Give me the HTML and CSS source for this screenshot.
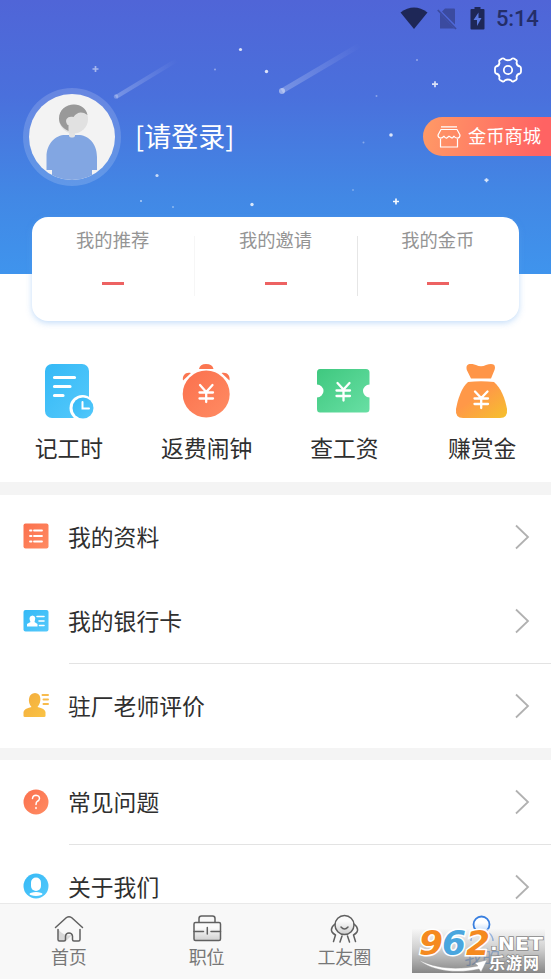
FILE: index.html
```html
<!DOCTYPE html>
<html lang="zh-CN">
<head>
<meta charset="utf-8">
<title>我的</title>
<link rel="stylesheet" href="styles.css">
</head>
<body>
<svg class="defs" width="0" height="0" aria-hidden="true">
  <defs>
    <linearGradient id="blue" x1="0" y1="0" x2="1" y2="1"><stop offset="0" stop-color="#35b9f6"/><stop offset="1" stop-color="#55c9fb"/></linearGradient>
    <linearGradient id="red" x1="0" y1="0" x2="1" y2="1"><stop offset="0" stop-color="#fb704d"/><stop offset="1" stop-color="#ff8c63"/></linearGradient>
    <linearGradient id="green" x1="0" y1="0" x2="1" y2="1"><stop offset="0" stop-color="#3fc87f"/><stop offset="1" stop-color="#68dfa4"/></linearGradient>
    <linearGradient id="gold" x1="0" y1="0" x2="1" y2="1"><stop offset=".4" stop-color="#ff9848"/><stop offset="1" stop-color="#f5c12d"/></linearGradient>
    <linearGradient id="amber" x1="0" y1="0" x2="1" y2="1"><stop offset="0" stop-color="#f3ac3c"/><stop offset="1" stop-color="#fac345"/></linearGradient>
    <linearGradient id="shade" x1="0" y1="0" x2="0" y2="1"><stop offset=".3" stop-color="#fafafa"/><stop offset="1" stop-color="#cfcfcf"/></linearGradient>
    <linearGradient id="trailA" gradientUnits="userSpaceOnUse" x1="116" y1="97" x2="177" y2="60"><stop offset="0" stop-color="#fff" stop-opacity=".25"/><stop offset="1" stop-color="#fff" stop-opacity="0"/></linearGradient>
    <linearGradient id="trailB" gradientUnits="userSpaceOnUse" x1="282" y1="91" x2="360" y2="45"><stop offset="0" stop-color="#fff" stop-opacity=".25"/><stop offset="1" stop-color="#fff" stop-opacity="0"/></linearGradient>
    <linearGradient id="blueBall" x1="0" y1="0" x2="0" y2="1"><stop offset=".4" stop-color="#fff"/><stop offset="1" stop-color="#bcd8fb"/></linearGradient>
    <clipPath id="face"><circle cx="43" cy="43" r="43"/></clipPath>
  </defs>
</svg>
<div class="app">
  <header class="hero">
    <svg class="sky" width="551" height="274" viewBox="0 0 551 274">
      <path d="M116 97L177 60" stroke="url(#trailA)" stroke-width="4"/>
      <circle cx="116" cy="96.500" r="2.200" fill="#fff" opacity=".25"/>
      <path d="M282 91L360 45" stroke="url(#trailB)" stroke-width="5"/>
      <circle cx="282" cy="91" r="3" fill="#fff" opacity=".45"/>
      <g fill="#fff">
        <circle cx="240.500" cy="49.500" r="1.600" opacity=".8"/><circle cx="266.500" cy="71.500" r="1.700" opacity=".8"/>
        <circle cx="215" cy="69.500" r="1" opacity=".4"/><circle cx="157" cy="175.500" r="1.600" opacity=".7"/>
        <circle cx="141" cy="201" r="1" opacity=".6"/><circle cx="173" cy="207" r="1" opacity=".4"/>
        <circle cx="252" cy="204.500" r="1.700" opacity=".8"/><circle cx="417" cy="60" r="1" opacity=".4"/>
        <circle cx="376.500" cy="96" r="1" opacity=".35"/><circle cx="391" cy="135" r="1.800" opacity=".8"/>
        <circle cx="363.500" cy="142.500" r="1" opacity=".35"/><circle cx="353" cy="190" r="1" opacity=".3"/>
      </g>
      <g stroke="#fff" stroke-width="1.700">
        <path d="M92.500 69h6M95.500 66v6" opacity=".5"/><path d="M432 84.200h6M435 81.200v6" opacity=".8"/>
        <path d="M393 201.500h6M396 198.500v6" opacity=".95"/><path d="M484.500 180.200h4M486.500 178.200v4" opacity=".8"/>
      </g>
    </svg>
    <div class="status">
      <svg width="28" height="24" viewBox="0 0 28 24"><path d="M.5 5.500Q14-4.500 27.500 5.500L14 22Z" fill="#1e2757"/></svg>
      <svg class="nosim" width="20" height="23" viewBox="0 0 20 23"><path d="M8 .5H17Q18 .5 18 1.500V16.500L5 3.500ZM3 5.500L17.500 20.500H3Z" fill="#3b4ba0"/><path d="M.8 2L19 21" stroke="#3b4ba0" stroke-width="1.800"/></svg>
      <svg class="battery" width="15" height="23" viewBox="0 0 15 23"><path d="M4.500 0H10.500V2H13.500Q14.500 2 14.500 3V21.500Q14.500 22.500 13.500 22.500H1.500Q.5 22.500 .5 21.500V3Q.5 2 1.500 2H4.500Z" fill="#1e2757"/><path d="M8.500 5.500L3.500 13H7V19L11.500 11H8.500Z" fill="#5a78e0"/></svg>
      <span class="time">5:14</span>
    </div>
    <div class="tools">
      <svg width="28" height="28" viewBox="0 0 28 28" fill="none" stroke="#fff" stroke-width="1.800" stroke-linejoin="round"><path d="M8 2.500Q10 1.800 11 3.500Q14 5 17 3.500Q18 1.800 20 2.500L22.500 4.200Q23.200 5 22.500 7Q23 10 26 10.500Q27 11 27 12.500V15.500Q27 17 26 17.500Q23 18 22.500 21Q23.200 23.200 22 24L19.500 25.400Q18 26 17 24.300Q14 22.700 11 24.300Q10 26 8.500 25.400L6 24Q4.800 23.200 5.500 21Q5 18 2 17.500Q1 17 1 15.500V12.500Q1 11 2 10.500Q5 10 5.500 7Q4.800 5 5.500 4.200Z"/><circle cx="14" cy="14" r="4.200"/></svg>
    </div>
    <div class="profile">
      <div class="avatar">
        <svg width="86" height="86" viewBox="0 0 86 86"><circle cx="43" cy="43" r="43" fill="#f3f3f3"/><g clip-path="url(#face)"><path d="M17.500 76V63C17.500 49 27 41 36 41H49C59 41 68 49 68 63V76H63V86H23V76Z" fill="#82a6e2"/><rect x="40" y="34" width="6" height="9.500" rx="2" fill="#e3e3e3"/><circle cx="44.500" cy="25" r="14.500" fill="#e1e1e1"/><path d="M39.500 37C33 34 30 29.500 30 24.500C30 16 37 10.500 45 10.500C52 10.500 57.500 15 58.500 21C53 17 48 18 44.500 23C39 21.500 36 25 37.500 29C38 31 39 31 39.500 31Z" fill="#999"/></g></svg>
      </div>
      <span class="login">[请登录]</span>
      <div class="mall">
        <svg width="24" height="22" viewBox="0 0 24 22" fill="none" stroke="#fff" stroke-width="1.200" stroke-linejoin="round"><path d="M4 .8H20M4 3.500H20L23 9Q23 12 20.500 12.200Q18 12 17 10.200Q15.500 12.500 14.500 11.800L12 10.200L9.500 12.200Q8 12 7 10.200Q5.500 12.200 3.500 12.200Q1 11.800 1 9ZM3.500 13V21H20.500V13"/></svg>
        <span>金币商城</span>
      </div>
    </div>
  </header>
  <main class="content">
    <section class="stats">
      <div class="stat"><span>我的推荐</span><i class="dash"></i></div>
      <div class="stat"><span>我的邀请</span><i class="dash"></i></div>
      <div class="stat"><span>我的金币</span><i class="dash"></i></div>
    </section>
    <section class="actions">
      <div class="action">
        <svg width="56" height="56" viewBox="0 0 56 56"><rect x="5" y="0" width="44" height="54" rx="7" fill="url(#blue)"/><path d="M14.500 13.500H34.500M14.500 22.500H30M14.500 31.500H23" stroke="#fff" stroke-width="3.200" stroke-linecap="round"/><circle cx="42.500" cy="44" r="13" fill="#fff"/><circle cx="43" cy="44" r="10.500" fill="url(#blue)"/><path d="M42.500 38V44.500H49" fill="none" stroke="#fff" stroke-width="2" stroke-linecap="round"/></svg>
        <span>记工时</span>
      </div>
      <div class="action">
        <svg width="56" height="56" viewBox="0 0 56 56"><circle cx="28.200" cy="30" r="23.500" fill="url(#red)"/><path d="M21 5Q22 0 28 0Q34.500 0 35.500 5ZM5 16.500C4 11 8 7.500 13 9ZM51.500 16.500C52.500 11 48.500 7.500 43.500 9Z" fill="#fb7651"/><path d="M22 21L28.200 28L34.500 21M21.500 28.500H35M21.500 34.500H35M28.200 28V38" fill="none" stroke="#fff" stroke-width="2.300" stroke-linecap="round"/></svg>
        <span>返费闹钟</span>
      </div>
      <div class="action">
        <svg width="56" height="56" viewBox="0 0 56 56"><path d="M5 5H51Q54.500 5 54.500 8.500V20.500A6.500 6.500 0 0 0 54.500 33.500V45Q54.500 48.500 51 48.500H5Q2 48.500 2 45V33.500A6.500 6.500 0 0 0 2 20.500V8.500Q2 5 5 5Z" fill="url(#green)"/><path d="M22.500 19L28.500 25.500L34.500 19M21.500 26.500H35M21.500 32H35M28.500 26V36.500" fill="none" stroke="#fff" stroke-width="2.300" stroke-linecap="round"/></svg>
        <span>查工资</span>
      </div>
      <div class="action">
        <svg width="56" height="56" viewBox="0 0 56 56"><path d="M18 14.500L13.800 6C12-1 18-1 23 1Q28 3.500 33 1C39-1 43.500 0 41.500 6L38 14.500Z" fill="#ff9548"/><path d="M15 18Q28 16.500 41 18C48 24 52 34 54 45Q55 54 47 54H10Q2 54 3 45C5 34 9 23 15 18Z" fill="url(#gold)"/><path d="M22 27.500L28.200 34L34.500 27.500M21.500 34.500H35M21.500 40H35M28.200 34V44" fill="none" stroke="#fff" stroke-width="2.300" stroke-linecap="round"/></svg>
        <span>赚赏金</span>
      </div>
    </section>
    <section class="menu">
      <div class="row">
        <svg class="ico" width="26" height="26" viewBox="0 0 26 26"><rect x=".5" y=".5" width="25" height="25" rx="2" fill="url(#red)"/><path d="M7 7.500H8.500M11 7.500H19M7 13H8.500M11 13H19M7 18.500H8.500M11 18.500H19" stroke="#fff" stroke-width="1.800" stroke-linecap="round"/></svg>
        <div class="cell"><span>我的资料</span><svg class="chevron" width="16" height="26" viewBox="0 0 16 26"><path d="M2 1.500L14 13L2 24.500"/></svg></div>
      </div>
      <div class="row line">
        <svg class="ico" width="26" height="26" viewBox="0 0 26 26"><rect x=".5" y="2" width="25" height="21.500" rx="2" fill="url(#blue)"/><path d="M4 18.500V16L7.500 14Q6.500 12 6.500 10Q7 7.500 9.500 7.500Q12 7.500 12.300 10Q12 12.500 11.500 14L14.500 16V18.500Z" fill="#fff"/><path d="M14 8.500H21M16 13H21M16.500 17.500H21" stroke="#fff" stroke-width="1.600" stroke-linecap="round"/></svg>
        <div class="cell"><span>我的银行卡</span><svg class="chevron" width="16" height="26" viewBox="0 0 16 26"><path d="M2 1.500L14 13L2 24.500"/></svg></div>
      </div>
      <div class="row">
        <svg class="ico" width="26" height="26" viewBox="0 0 26 26"><path d="M8.500 15C4 10 5.500 1 12 1S19 10 14.500 15Q22 16.500 22.500 20V24Q22.500 25 21 25H2Q.5 25 .5 24V20Q1 16.500 8.500 15Z" fill="url(#amber)"/><path d="M19.500 3H25M20.500 7.500H25M20.500 12H25" stroke="#f8bb4c" stroke-width="2" stroke-linecap="round"/></svg>
        <div class="cell"><span>驻厂老师评价</span><svg class="chevron" width="16" height="26" viewBox="0 0 16 26"><path d="M2 1.500L14 13L2 24.500"/></svg></div>
      </div>
    </section>
    <section class="menu">
      <div class="row line">
        <svg class="ico" width="26" height="26" viewBox="0 0 26 26"><circle cx="13" cy="13" r="12.500" fill="url(#red)"/><path d="M9.500 9.500Q9.800 6.200 13 6.200Q16.500 6.500 16.500 9.500Q16.200 11.500 14.500 12.200Q13 13 13 15.500M13 18.500V19.500" fill="none" stroke="#fff" stroke-width="1.500" stroke-linecap="round"/></svg>
        <div class="cell"><span>常见问题</span><svg class="chevron" width="16" height="26" viewBox="0 0 16 26"><path d="M2 1.500L14 13L2 24.500"/></svg></div>
      </div>
      <div class="row">
        <svg class="ico" width="26" height="26" viewBox="0 0 26 26"><circle cx="13" cy="13" r="12.500" fill="url(#blue)"/><rect x="8" y="4.500" width="10" height="13.500" rx="5" fill="#fff"/><ellipse cx="13" cy="21" rx="6.500" ry="1.900" fill="#fff"/></svg>
        <div class="cell"><span>关于我们</span><svg class="chevron" width="16" height="26" viewBox="0 0 16 26"><path d="M2 1.500L14 13L2 24.500"/></svg></div>
      </div>
    </section>
  </main>
  <nav class="tabs">
    <div class="tab">
      <svg width="30" height="30" viewBox="0 0 30 30"><path d="M4 15Q10 23 18 21L12 27H5Z" fill="#d8d8d8"/><path d="M1.500 13.500L12.500 3.500Q15 1.800 17.500 3.500L28.500 13.500M4 15.500V25.500Q4 27 5.500 27H10Q11.500 27 11.500 25.500V22Q12 19 15 19Q18 19 18.500 22V25.500Q18.500 27 20 27H24.500Q26 27 26 25.500V15.500" class="ink"/></svg>
      <span>首页</span>
    </div>
    <div class="tab">
      <svg width="30" height="30" viewBox="0 0 30 30"><rect x="2" y="8.500" width="26.500" height="18" rx="1.500" fill="url(#shade)"/><path d="M7 8V4.500Q7 2 9.500 2H20.500Q23 2 23 4.500V8M2 17.500H11.500M19 17.500H28.500M15.300 13.500V20" class="ink"/><rect x="2" y="8.500" width="26.500" height="18" rx="1.500" class="ink"/></svg>
      <span>职位</span>
    </div>
    <div class="tab">
      <svg width="30" height="30" viewBox="0 0 30 30"><circle cx="15.500" cy="11" r="9.500" fill="url(#shade)" stroke="#606060" stroke-width="1.500"/><path d="M12 13Q15.500 17 19 13M6 10Q1 14 3 18Q4 19.500 6.500 21L4.500 27.500M25 10Q30 14 28 18Q27 19.500 24.500 21L26.500 27.500M13 22L11 28M18.500 22L20.500 28" class="ink"/></svg>
      <span>工友圈</span>
    </div>
    <div class="tab active">
      <svg width="30" height="30" viewBox="0 0 30 30"><circle cx="14.500" cy="10.500" r="8" fill="url(#blueBall)" stroke="#397fdf" stroke-width="1.800"/><path d="M7.500 19Q4 22 4 27M22 19Q26 22 26 27" fill="none" stroke="#397fdf" stroke-width="1.500"/></svg>
      <span>我的</span>
    </div>
  </nav>
</div>
<div class="watermark">
  <svg width="133" height="44" viewBox="0 0 133 44">
    <g class="digits"><text x="7" y="26" textLength="24" lengthAdjust="spacingAndGlyphs" fill="#f58a1f">9</text><text x="30" y="26" textLength="24" lengthAdjust="spacingAndGlyphs" fill="#4aa6de">6</text><text x="54" y="26" textLength="24" lengthAdjust="spacingAndGlyphs" fill="#f58a1f">2</text></g>
    <text class="net" x="78" y="20.500" textLength="53" lengthAdjust="spacingAndGlyphs">.NET</text>
    <path d="M7 31C25 40 45 41 66 37L63 34L75 31L69 43L67 40C45 45 20 42 7 31Z" fill="#fff" stroke="#999" stroke-width=".4"/>
    <text class="site" x="77" y="39.500" textLength="50">乐游网</text>
  </svg>
</div>
</body>
</html>
```
FILE: styles.css
```css
* { box-sizing: border-box; }

body {
  margin: 0;
  width: 551px;
  height: 979px;
  overflow: hidden;
  position: relative;
  background: #fff;
  color: #2f2f2f;
  font-family: "Noto Sans CJK SC", sans-serif;
}

svg { display: block; flex: none; }
.defs { position: absolute; }

.app { height: 979px; display: flex; flex-direction: column; }

.hero {
  flex: none;
  height: 274px;
  position: relative;
  background: linear-gradient(#5065d7 0%, #4a70dc 35%, #4288e5 72%, #3f94ed 100%);
}
.sky { position: absolute; inset: 0; }

.status {
  position: relative;
  height: 40px;
  padding: 7px 12px 0 400px;
  display: flex;
  align-items: flex-start;
}
.nosim { margin: 1px 0 0 9px; }
.battery { margin-left: 13px; }
.time {
  margin-left: 11px;
  font: 500 22px/24px Roboto, sans-serif;
  letter-spacing: -.2px;
  color: #242e68;
}

.tools {
  position: relative;
  height: 48px;
  padding: 16px 29px 0 0;
  display: flex;
  justify-content: flex-end;
}

.profile {
  position: relative;
  height: 97px;
  padding-left: 23px;
  display: flex;
  align-items: center;
}
.avatar {
  width: 98px;
  height: 98px;
  padding: 6px;
  border-radius: 50%;
  background: rgba(255, 255, 255, .16);
}
.login { margin-left: 14px; padding-bottom: 1px; font-size: 27px; line-height: 40px; color: #fff; }
.mall {
  width: 128px;
  height: 39px;
  margin-left: auto;
  padding-left: 14px;
  display: flex;
  align-items: center;
  gap: 7px;
  border-radius: 20px 0 0 20px;
  background: linear-gradient(100deg, #ff9a66, #ff6363 90%);
  color: #fff;
  font-size: 18.3px;
  white-space: nowrap;
}
.mall span { padding-bottom: 3px; }

.content { flex: 1; min-height: 0; overflow: visible; position: relative; }

.stats {
  height: 104px;
  margin: -57px 32px 0;
  padding-top: 19px;
  display: grid;
  grid-template-columns: repeat(3, 1fr);
  border-radius: 16px;
  background: #fff;
  box-shadow: 0 2px 6px rgba(100, 165, 240, .38);
}
.stat {
  height: 60px;
  display: flex;
  flex-direction: column;
  align-items: center;
  color: #949494;
  font-size: 18.3px;
  line-height: 26px;
}
.stat + .stat { border-left: 1px solid #f6f6f6; }
.stat + .stat + .stat { border-left-color: #e6e6e6; }
.stat span { margin: -10px 1px 0 0; }
.dash { width: 22px; height: 3px; margin-top: 30px; background: #ed6262; }

.actions {
  height: 161px;
  padding-top: 43px;
  display: grid;
  grid-template-columns: repeat(4, 1fr);
}
.action {
  display: flex;
  flex-direction: column;
  align-items: center;
  font-size: 22.8px;
  line-height: 34px;
}
.action svg { margin-right: 2px; }
.action span { margin-top: 11px; }

.menu { border-top: 12px solid #f4f4f4; }
.actions + .menu { border-top-width: 13px; }

.row { height: 84px; padding-left: 23px; display: flex; align-items: center; }
.line { height: 85px; }
.ico { margin: 0 20px 2px 0; }
.cell {
  flex: 1;
  height: 100%;
  padding-right: 21px;
  display: flex;
  align-items: center;
  justify-content: space-between;
  font-size: 22.8px;
  line-height: 34px;
}
.line .cell { border-bottom: 1px solid #e3e3e3; }
.cell span { margin-left: -1px; padding-bottom: 1px; }
.chevron path { fill: none; stroke: #b1b1b1; stroke-width: 1.8; }

.tabs {
  position: relative;
  flex: none;
  height: 76px;
  padding-top: 10px;
  display: grid;
  grid-template-columns: repeat(4, 1fr);
  border-top: 1px solid #e9e9e9;
  background: #f8f8f8;
}
.tab {
  display: flex;
  flex-direction: column;
  align-items: center;
  color: #777;
  font-size: 18px;
  line-height: 24px;
}
.active { color: #397fdf; }
.ink { fill: none; stroke: #606060; stroke-width: 1.5; stroke-linecap: round; stroke-linejoin: round; }

.watermark {
  position: absolute;
  left: 412px;
  top: 929px;
  width: 133px;
  height: 44px;
  background: linear-gradient(rgba(245, 245, 245, .5), rgba(185, 185, 185, .65) 45%, rgba(115, 115, 115, .85));
}
.watermark svg { overflow: visible; }
.digits {
  font: italic 700 33px "DejaVu Sans", sans-serif;
  stroke: #fff;
  stroke-width: 3px;
  paint-order: stroke;
}
.net, .site { fill: #fff; stroke: #888; stroke-width: 1.5px; paint-order: stroke; }
.net { font: 700 18px "DejaVu Sans", sans-serif; }
.site { font: 700 16px "Noto Sans CJK SC", sans-serif; }
```
